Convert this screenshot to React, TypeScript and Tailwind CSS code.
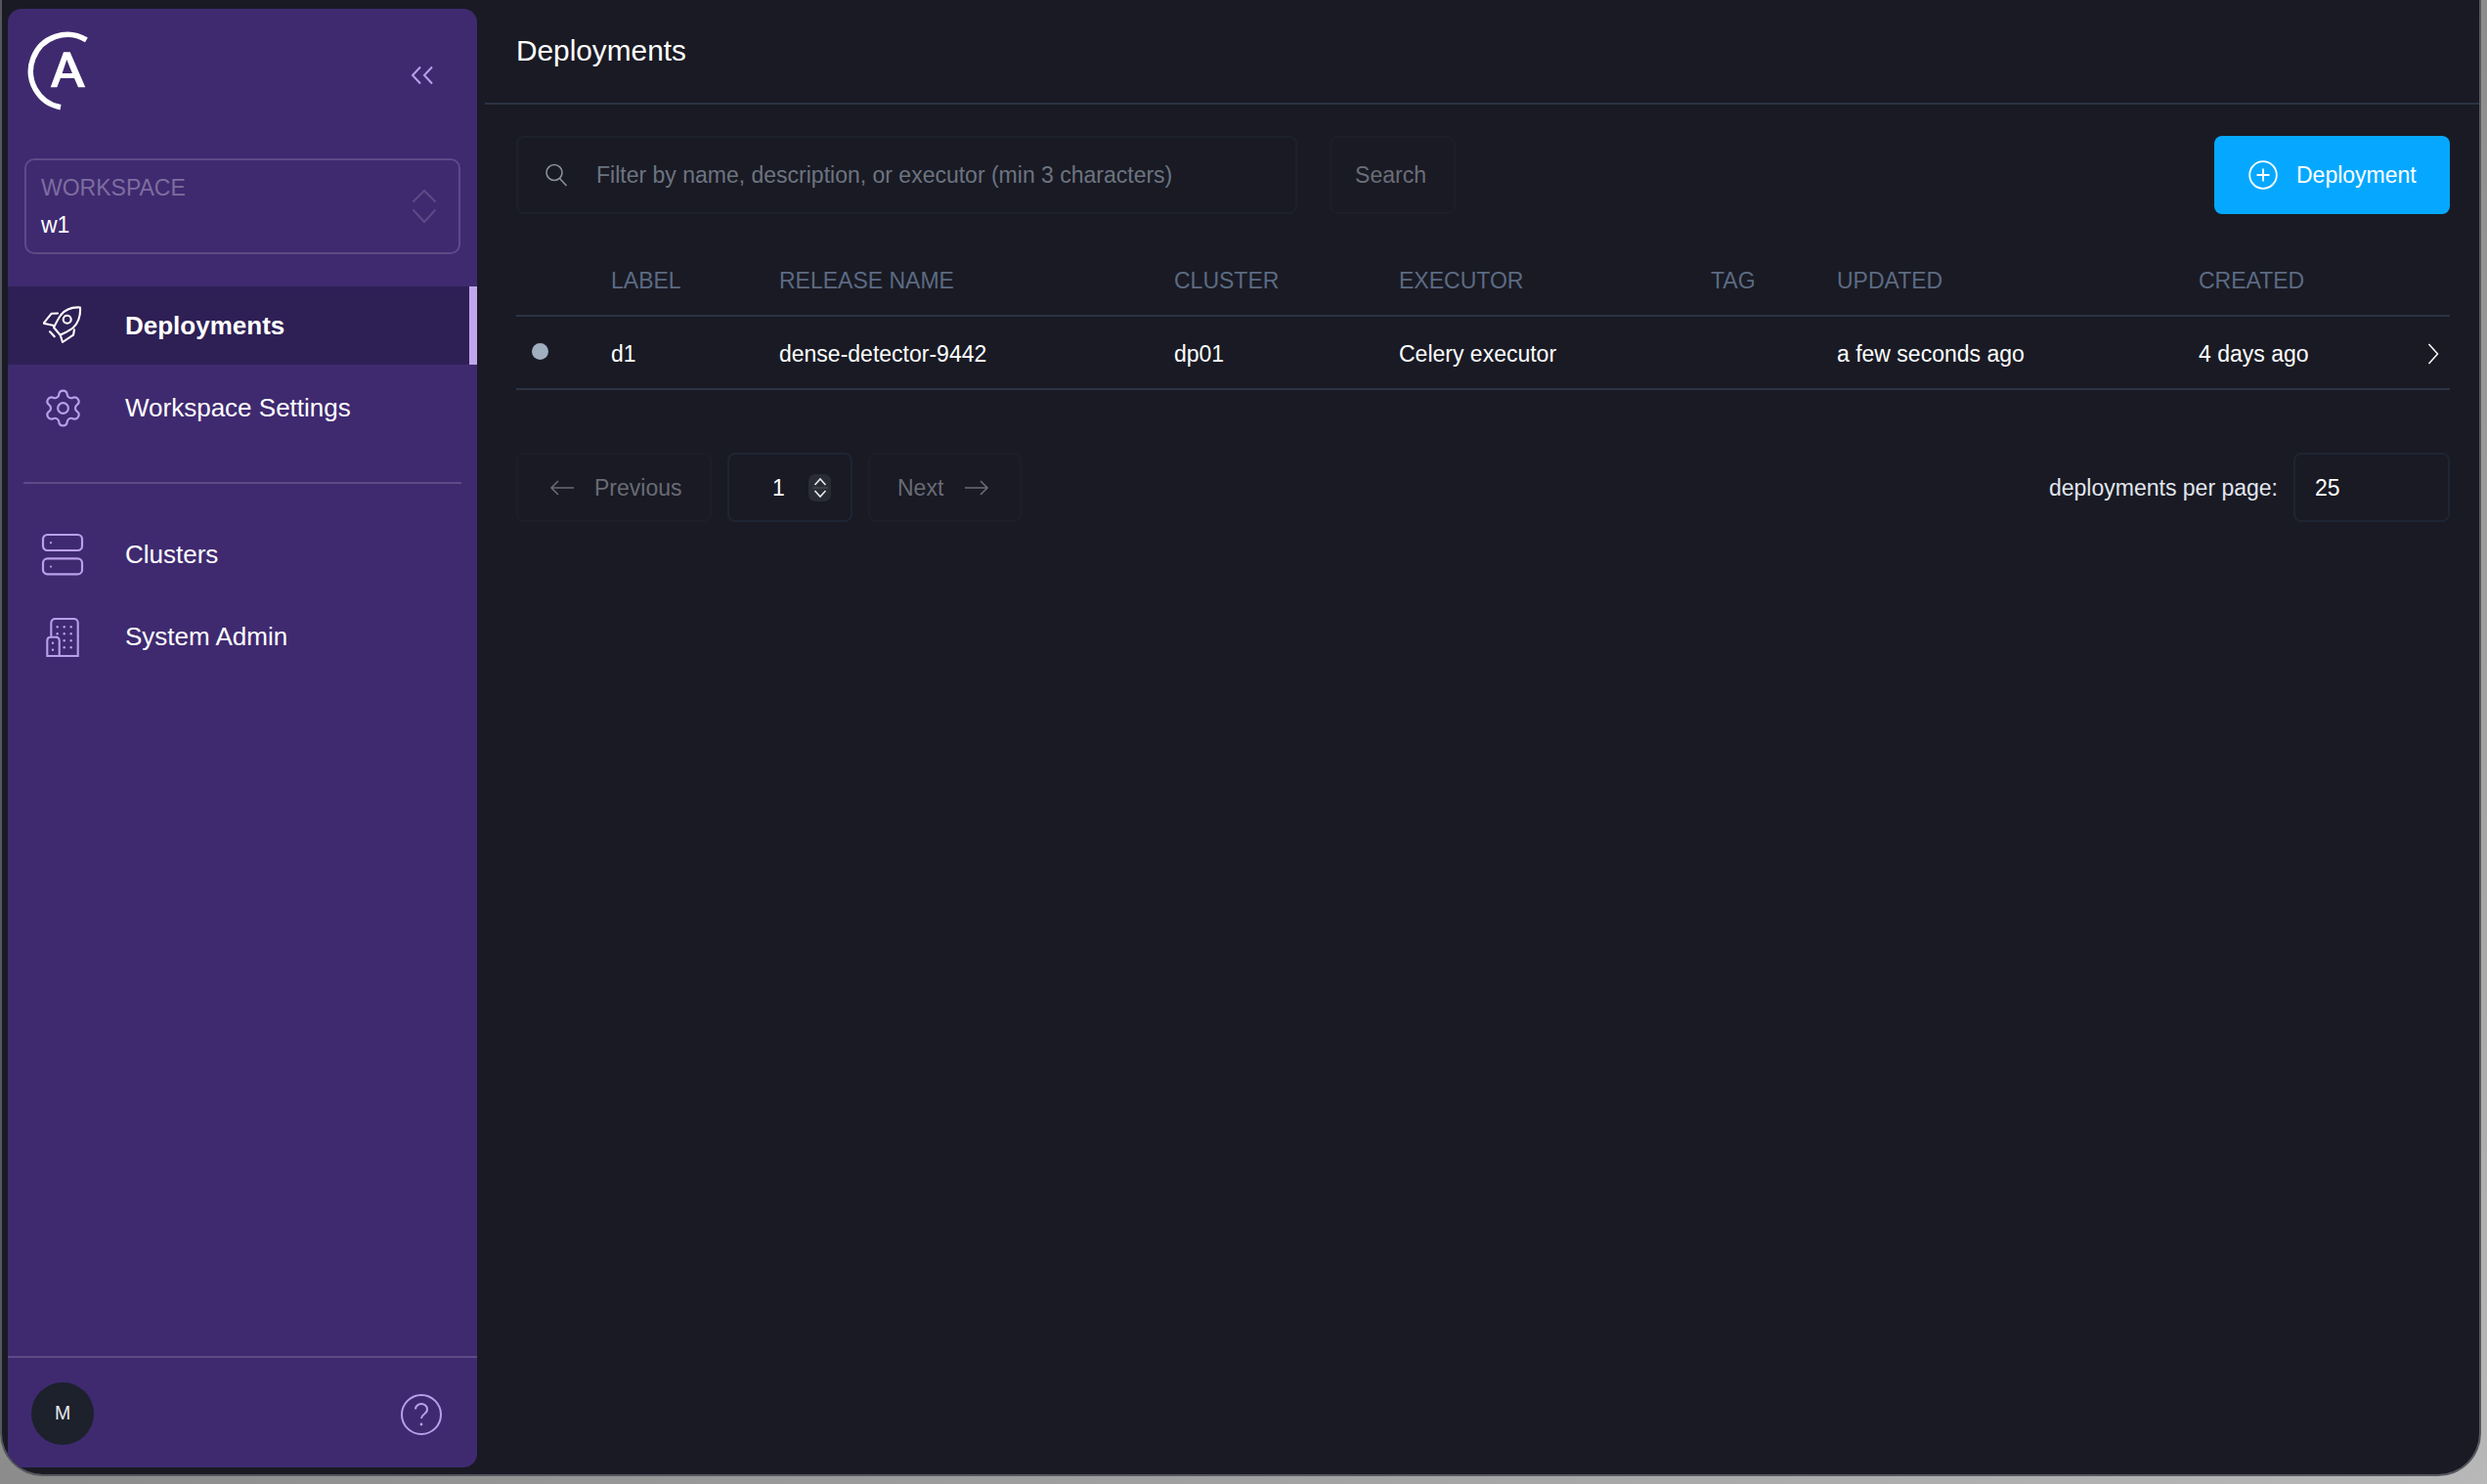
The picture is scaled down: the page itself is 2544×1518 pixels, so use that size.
const columns = "grid grid-cols-[97px_172px_404px_230px_319px_129px_370px_257px]";
const sans = "font-['Liberation_Sans',Arial,sans-serif]";

function Logo() {
  return (
    <svg width="66" height="84" viewBox="0 0 66 84" fill="none">
      <path d="M62.4 9.9A37.5 37.5 0 1 0 36 78.8" stroke="#fff" strokeWidth="5.5" />
      <path
        fillRule="evenodd"
        fill="#fff"
        d="M39 22.3H45.7L61.3 58.3H54L50 49H35.9L32.3 58.3H25.7ZM42.3 30L37.6 44H47.9Z"
      />
    </svg>
  );
}

function CollapseIcon() {
  return (
    <svg width="24" height="20" viewBox="0 0 24 20" fill="none" stroke="#b9a0e8" strokeWidth="2">
      <path d="M10 1.5L2 10L10 18.5" />
      <path d="M22 1.5L14 10L22 18.5" />
    </svg>
  );
}

function RocketIcon() {
  return (
    <svg width="40" height="40" viewBox="0 0 40 40" fill="none" stroke="#fff" strokeWidth="2.1" strokeLinejoin="round" strokeLinecap="round">
      <path d="M38 1.5C31 1 23 3 18 9.5C15.5 13 13 18 11 22L17.7 29.7C22 27.5 27 25.5 31 22C36.5 16.5 38.5 9 38 1.5Z" />
      <path d="M15 7.5L8.7 7.7L0.6 17.7L11 20" />
      <path d="M32 24.3L31 29.7L20 37L17.7 29.7" />
      <circle cx="24.7" cy="13.7" r="4" />
      <path d="M7 26.3L11.7 31.3" />
    </svg>
  );
}

function GearIcon() {
  return (
    <svg width="43" height="43" viewBox="0 0 24 24" fill="none" stroke="#b9a0e8" strokeWidth="1.2" strokeLinecap="round" strokeLinejoin="round">
      <path d="M9.671 4.136a2.34 2.34 0 0 1 4.659 0 2.34 2.34 0 0 0 3.319 1.915 2.34 2.34 0 0 1 2.33 4.033 2.34 2.34 0 0 0 0 3.831 2.34 2.34 0 0 1-2.33 4.033 2.34 2.34 0 0 0-3.319 1.915 2.34 2.34 0 0 1-4.659 0 2.34 2.34 0 0 0-3.32-1.915 2.34 2.34 0 0 1-2.33-4.033 2.34 2.34 0 0 0 0-3.831A2.34 2.34 0 0 1 6.35 6.051a2.34 2.34 0 0 0 3.319-1.915" />
      <circle cx="12" cy="12" r="3" />
    </svg>
  );
}

function ServerIcon() {
  return (
    <svg width="44" height="44" viewBox="0 0 44 44" fill="none" stroke="#b9a0e8" strokeWidth="2.2">
      <rect x="2" y="2" width="40" height="16" rx="4.5" />
      <rect x="2" y="26.4" width="40" height="16" rx="4.5" />
      <circle cx="10" cy="10.2" r="1.1" fill="#b9a0e8" stroke="none" />
      <circle cx="10" cy="34.6" r="1.1" fill="#b9a0e8" stroke="none" />
    </svg>
  );
}

function BuildingIcon() {
  const dots = [
    [11.7, 10.3], [18.7, 10.3], [25.7, 10.3],
    [11.7, 17.3], [18.7, 17.3], [25.7, 17.3],
    [18.7, 24.3], [25.7, 24.3],
    [18.7, 31.3], [25.7, 31.3],
    [7, 26.7], [7, 33.7],
  ];
  return (
    <svg width="34" height="41" viewBox="0 0 34 41" fill="none" stroke="#b9a0e8" strokeWidth="2.1">
      <path d="M5.3 20V6A4 4 0 0 1 9.3 2H28.7A4 4 0 0 1 32.7 6V40H1.3V24A3.5 3.5 0 0 1 4.8 20.7H9.5A3.5 3.5 0 0 1 13.7 24V40" />
      {dots.map(([cx, cy]) => (
        <circle key={`${cx}-${cy}`} cx={cx} cy={cy} r="1.2" fill="#b9a0e8" stroke="none" />
      ))}
    </svg>
  );
}

function HelpIcon() {
  return (
    <svg className="mt-[2px]" width="42" height="42" viewBox="0 0 42 42" fill="none" stroke="#b9a0e8" strokeWidth="2">
      <circle cx="21" cy="21" r="20" />
      <path d="M15 15.5a6 5.5 0 1 1 9.5 4.5c-2 1.5-3.5 2.5-3.5 5" />
      <circle cx="21" cy="31" r="1.4" fill="#b9a0e8" stroke="none" />
    </svg>
  );
}

function NavItem({ icon, label, active }: { icon: React.ReactNode; label: string; active?: boolean }) {
  return (
    <div className={`flex h-[80px] items-center ${active ? "bg-[#2e2055] border-r-[8px] border-[#c0a6ec]" : ""}`}>
      <div className="flex w-[112px] justify-center">{icon}</div>
      <span className={`ml-[8px] text-[26px] text-white ${active ? "font-bold" : ""}`}>{label}</span>
    </div>
  );
}

function Sidebar() {
  return (
    <aside className="ml-[6px] mt-[9px] mb-[7px] flex w-[480px] shrink-0 flex-col rounded-[14px] bg-[#3f2a70]">
      <div className="flex h-[153px] items-start justify-between">
        <div className="ml-[18px] mt-[22px]">
          <Logo />
        </div>
        <div className="mr-[44px] mt-[58px]">
          <CollapseIcon />
        </div>
      </div>

      <div className="mx-[17px] flex h-[98px] items-center justify-between rounded-[10px] border-2 border-[#5e4a86] pl-[15px] pr-[22px]">
        <div>
          <div className="mb-[2px] text-[23px] leading-[30px] text-[#7e6d9f]">WORKSPACE</div>
          <div className="mt-[8px] text-[23px] leading-[30px] text-white">w1</div>
        </div>
        <svg width="26" height="36" viewBox="0 0 26 36" fill="none" stroke="#5e4a86" strokeWidth="2">
          <path d="M1.5 13.5L13 2L24.5 13.5" />
          <path d="M1.5 21.5L13 34L24.5 21.5" />
        </svg>
      </div>

      <div className="mt-[33px]">
        <NavItem icon={<RocketIcon />} label="Deployments" active />
      </div>
      <div className="mt-[4px]">
        <NavItem icon={<GearIcon />} label="Workspace Settings" />
      </div>

      <div className="mx-[16px] mt-[36px] h-[2px] bg-[#5e4a86]" />

      <div className="mt-[32px]">
        <NavItem icon={<ServerIcon />} label="Clusters" />
      </div>
      <div className="mt-[4px]">
        <NavItem icon={<BuildingIcon />} label="System Admin" />
      </div>

      <div className="mt-auto flex h-[114px] items-center justify-between border-t-2 border-[#5e4a86] pl-[24px] pr-[36px] pt-[1px]">
        <div className="flex h-[64px] w-[64px] items-center justify-center rounded-full bg-[#1c212c] pt-[1px] text-[19.5px] text-[#e6e8ee]">
          M
        </div>
        <HelpIcon />
      </div>
    </aside>
  );
}

function Toolbar() {
  return (
    <div className="flex h-[80px] items-stretch">
      <div className="flex w-[799px] items-center rounded-[8px] border-2 border-[#1d212c] pl-[27px]">
        <svg width="24" height="24" viewBox="0 0 24 24" fill="none" stroke="#8a909c" strokeWidth="1.6">
          <circle cx="10" cy="9.5" r="8" />
          <path d="M15.5 15.5L22.5 23" />
        </svg>
        <span className="ml-[29px] text-[23px] text-[#6c7480]">
          Filter by name, description, or executor (min 3 characters)
        </span>
      </div>
      <div className="ml-[33px] flex w-[129px] items-center justify-center rounded-[8px] border-2 border-[#1c1e28] pr-[4px] text-[23px] text-[#6b6d77]">
        Search
      </div>
      <div className="ml-auto flex w-[241px] items-center rounded-[8px] bg-[#06a8ff] pl-[35px] text-[23px] text-white">
        <svg width="30" height="30" viewBox="0 0 30 30" fill="none" stroke="#fff" strokeWidth="1.8">
          <circle cx="15" cy="15" r="13.8" />
          <path d="M15 8.5V21.5M8.5 15H21.5" />
        </svg>
        <span className="ml-[19px]">Deployment</span>
      </div>
    </div>
  );
}

function Table() {
  const headers = ["", "LABEL", "RELEASE NAME", "CLUSTER", "EXECUTOR", "TAG", "UPDATED", "CREATED"];
  return (
    <div className="mt-[47px]">
      <div className={`${columns} h-[58px] items-center border-b-2 border-[#2c3444] pb-[14px] text-[23px] text-[#5c6b82]`}>
        {headers.map((h, i) => (
          <div key={i}>{h}</div>
        ))}
      </div>
      <div className={`${columns} h-[75px] items-center border-b-2 border-[#2c3444] pt-[3px] text-[23px] text-white`}>
        <div className="pl-[16px]">
          <div className="mb-[5px] h-[17px] w-[17px] rounded-full bg-[#a0aec0]" />
        </div>
        <div>d1</div>
        <div>dense-detector-9442</div>
        <div>dp01</div>
        <div>Celery executor</div>
        <div />
        <div>a few seconds ago</div>
        <div className="flex items-center justify-between pr-[11px]">
          <span>4 days ago</span>
          <svg width="12" height="22" viewBox="0 0 12 22" fill="none" stroke="#fff" strokeWidth="1.5">
            <path d="M1.5 1L10.5 11L1.5 21" />
          </svg>
        </div>
      </div>
    </div>
  );
}

function Pagination() {
  return (
    <div className="mt-[64px] flex h-[71px] items-stretch text-[23px]">
      <div className="flex w-[200px] items-center rounded-[8px] border-2 border-[#1c1e28] pl-[32px] pt-[2px] text-[#696b75]">
        <svg className="mb-[2px]" width="26" height="18" viewBox="0 0 26 18" fill="none" stroke="#696b75" strokeWidth="1.6">
          <path d="M25 9H2M9 2L2 9L9 16" />
        </svg>
        <span className="ml-[20px]">Previous</span>
      </div>
      <div className="ml-[16px] flex w-[128px] items-center rounded-[8px] border-2 border-[#1e2533] pl-[44px] text-white">
        <span className="w-[37px] pt-[2px]">1</span>
        <div className="flex h-[28px] w-[23px] flex-col items-center justify-between rounded-[7px] bg-[#2a2c35] py-[3px]">
          <svg width="14" height="9" viewBox="0 0 14 9" fill="none" stroke="#e8e8ec" strokeWidth="1.6">
            <path d="M1.5 8L7 2L12.5 8" />
          </svg>
          <div className="h-[2px] w-[16px] bg-[#3b3d47]" />
          <svg width="14" height="9" viewBox="0 0 14 9" fill="none" stroke="#e8e8ec" strokeWidth="1.6">
            <path d="M1.5 1L7 7L12.5 1" />
          </svg>
        </div>
      </div>
      <div className="ml-[16px] flex w-[157px] items-center rounded-[8px] border-2 border-[#1c1e28] pl-[28px] pt-[2px] text-[#696b75]">
        <span>Next</span>
        <svg className="mb-[2px] ml-[21px]" width="26" height="18" viewBox="0 0 26 18" fill="none" stroke="#696b75" strokeWidth="1.6">
          <path d="M1 9H24M17 2L24 9L17 16" />
        </svg>
      </div>
      <div className="ml-auto flex items-center pt-[2px] text-[#e2e6ee]">deployments per page:</div>
      <div className="ml-[16px] flex w-[160px] items-center rounded-[8px] border-2 border-[#1e2533] pl-[20px] pt-[2px] text-white">25</div>
    </div>
  );
}

export default function App() {
  return (
    <div className={`${sans} h-[1518px] w-[2544px] overflow-hidden bg-gradient-to-br from-[#d0d0d0] via-[#8c8c8c] to-[#b8b8b8]`}>
      <div className="flex h-[1510px] w-[2538px] overflow-hidden rounded-b-[44px] border-x-2 border-b-2 border-[#55565e] bg-[#191a24]">
        <Sidebar />
        <main className="ml-[8px] flex min-w-0 flex-1 flex-col">
          <div className="flex h-[107px] shrink-0 items-center border-b-2 border-[#2c3444] pl-[32px] text-[29.8px] text-white">
            Deployments
          </div>
          <div className="pl-[32px] pr-[30px] pt-[32px]">
            <Toolbar />
            <Table />
            <Pagination />
          </div>
        </main>
      </div>
    </div>
  );
}
